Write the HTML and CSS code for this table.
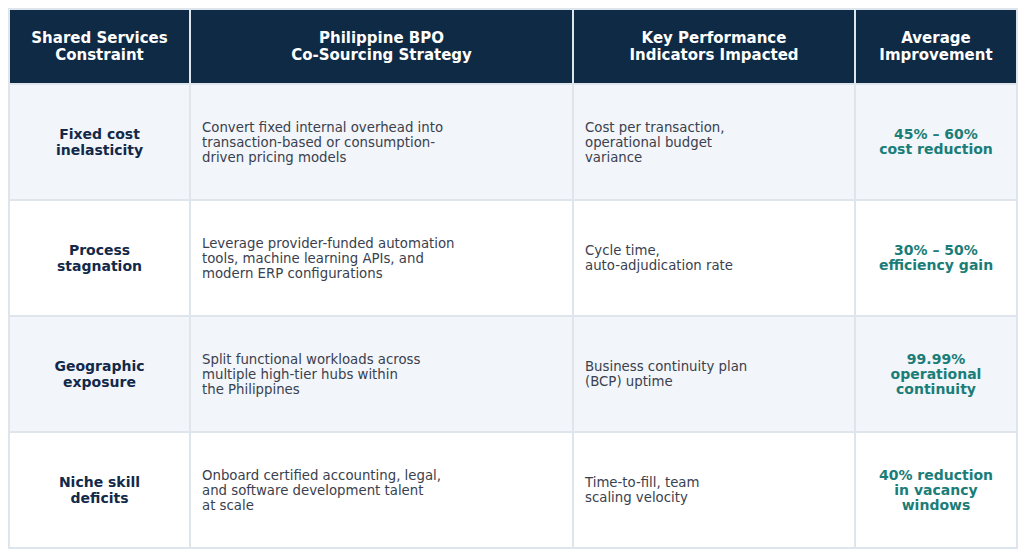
FILE: index.html
```html
<!DOCTYPE html>
<html lang="en">
<head>
<meta charset="utf-8">
<title>Shared Services Constraints</title>
<link rel="stylesheet" href="styles.css">
</head>
<body>
<table class="matrix">
  <colgroup>
    <col class="c1"><col class="c2"><col class="c3"><col class="c4">
  </colgroup>
  <thead>
    <tr>
      <th>Shared Services<br>Constraint</th>
      <th>Philippine BPO<br>Co-Sourcing Strategy</th>
      <th>Key Performance<br>Indicators Impacted</th>
      <th>Average<br>Improvement</th>
    </tr>
  </thead>
  <tbody>
    <tr class="alt">
      <td class="name">Fixed cost<br>inelasticity</td>
      <td class="text">Convert fixed internal overhead into<br>transaction-based or consumption-<br>driven pricing models</td>
      <td class="text">Cost per transaction,<br>operational budget<br>variance</td>
      <td class="gain">45% – 60%<br>cost reduction</td>
    </tr>
    <tr>
      <td class="name">Process<br>stagnation</td>
      <td class="text">Leverage provider-funded automation<br>tools, machine learning APIs, and<br>modern ERP configurations</td>
      <td class="text">Cycle time,<br>auto-adjudication rate</td>
      <td class="gain">30% – 50%<br>efficiency gain</td>
    </tr>
    <tr class="alt">
      <td class="name">Geographic<br>exposure</td>
      <td class="text">Split functional workloads across<br>multiple high-tier hubs within<br>the Philippines</td>
      <td class="text">Business continuity plan<br>(BCP) uptime</td>
      <td class="gain">99.99%<br>operational<br>continuity</td>
    </tr>
    <tr>
      <td class="name">Niche skill<br>deficits</td>
      <td class="text">Onboard certified accounting, legal,<br>and software development talent<br>at scale</td>
      <td class="text">Time-to-fill, team<br>scaling velocity</td>
      <td class="gain">40% reduction<br>in vacancy<br>windows</td>
    </tr>
  </tbody>
</table>
</body>
</html>
```
FILE: styles.css
```css
html, body {
  margin: 0;
  padding: 0;
  background: #ffffff;
}
body {
  padding: 8px;
  font-family: "DejaVu Sans", Verdana, sans-serif;
}
.matrix {
  width: 1008px;
  border-collapse: collapse;
  table-layout: fixed;
  border: 2px solid #dfe5ed;
}
.c1 { width: 181px; }
.c2 { width: 383px; }
.c3 { width: 282px; }
.c4 { width: 162px; }
.matrix th {
  background: #0f2a44;
  color: #ffffff;
  font-weight: bold;
  font-size: 15px;
  line-height: 17px;
  height: 73px;
  padding: 0 8px;
  text-align: center;
  vertical-align: middle;
  border: 2px solid #dfe5ed;
}
.matrix td {
  height: 114px;
  padding: 0 11px;
  vertical-align: middle;
  border: 2px solid #dfe5ed;
}
.matrix tr.alt td {
  background: #f2f5f9;
}
.name {
  text-align: center;
  font-weight: bold;
  font-size: 14px;
  line-height: 16px;
  color: #13294a;
}
.text {
  text-align: left;
  font-size: 13.3px;
  line-height: 15px;
  color: #3a414e;
}
.gain {
  text-align: center;
  font-weight: bold;
  font-size: 14px;
  line-height: 15px;
  color: #1a7d78;
}
```
